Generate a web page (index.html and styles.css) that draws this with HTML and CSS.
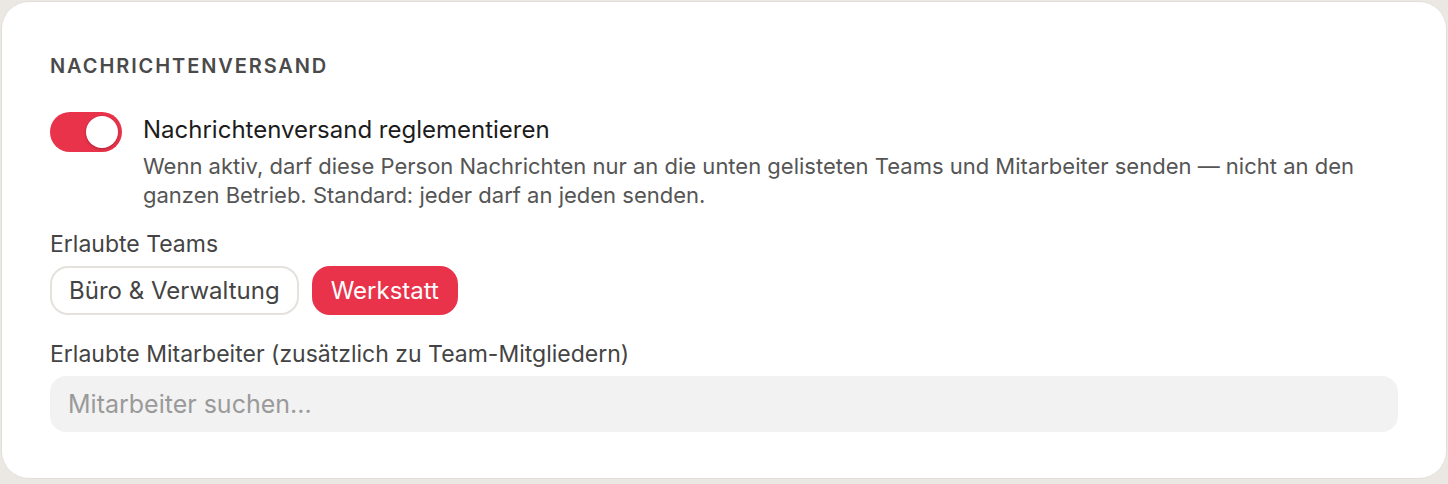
FILE: index.html
```html
<!DOCTYPE html>
<html lang="de">
<head>
    <meta charset="UTF-8">
    <meta name="viewport" content="width=device-width, initial-scale=1.0">
    <title>Nachrichtenversand</title>
    <link rel="stylesheet" href="styles.css">
</head>
<body>
    <section class="card">
        <h2 class="card-title">Nachrichtenversand</h2>

        <div class="toggle-row">
            <span class="toggle on"><span class="knob"></span></span>
            <div class="toggle-text">
                <div class="toggle-label">Nachrichtenversand reglementieren</div>
                <p class="toggle-desc">Wenn aktiv, darf diese Person Nachrichten nur an die unten gelisteten Teams und Mitarbeiter senden — nicht an den ganzen Betrieb. Standard: jeder darf an jeden senden.</p>
            </div>
        </div>

        <div class="field">
            <div class="field-label">Erlaubte Teams</div>
            <div class="chips">
                <span class="chip">Büro &amp; Verwaltung</span>
                <span class="chip active">Werkstatt</span>
            </div>
        </div>

        <div class="field">
            <div class="field-label">Erlaubte Mitarbeiter (zusätzlich zu Team-Mitgliedern)</div>
            <input class="search" type="text" placeholder="Mitarbeiter suchen...">
        </div>
    </section>
</body>
</html>
```

FILE: styles.css
```css
* {
    margin: 0;
    padding: 0;
    box-sizing: border-box;
    font-family: Inter, "Noto Sans", sans-serif;
}
body {
    background: #ebe8e3;
    padding: 1px 1px 5px 1px;
}
.card {
    background: #fff;
    border: 1px solid #e2dfda;
    border-radius: 28px;
    padding: 50px 48px 46px 48px;
    height: 478px;
}
.card-title {
    font-size: 20px;
    font-weight: 600;
    letter-spacing: 1.9px;
    text-transform: uppercase;
    color: #4a4a4a;
    line-height: 28px;
    margin-bottom: 32px;
}
.toggle-row {
    display: flex;
    gap: 21px;
    align-items: flex-start;
}
.toggle {
    flex: none;
    width: 72px;
    height: 40px;
    border-radius: 20px;
    background: #e8334b;
    display: flex;
    align-items: center;
    justify-content: flex-end;
    padding: 4px;
}
.knob {
    width: 32px;
    height: 32px;
    border-radius: 50%;
    background: #fff;
    box-shadow: 0 1px 3px rgba(0, 0, 0, 0.25);
}
.toggle-label {
    font-size: 24px;
    color: #1c1c1c;
    line-height: 36px;
}
.toggle-desc {
    font-size: 22px;
    color: #555;
    line-height: 29px;
    margin-top: 4px;
}
.field {
    margin-top: 21px;
}
.field + .field {
    margin-top: 26px;
}
.field-label {
    font-size: 23px;
    color: #444;
    line-height: 26px;
    margin-bottom: 9px;
}
.chips {
    display: flex;
    gap: 13px;
}
.chip {
    height: 49px;
    padding: 0 17px;
    border: 2px solid #e5e2dd;
    border-radius: 18px;
    font-size: 24px;
    color: #444;
    display: flex;
    align-items: center;
}
.chip.active {
    background: #e8334b;
    border-color: #e8334b;
    color: #fff;
}
.search {
    display: block;
    width: 100%;
    height: 56px;
    border: none;
    outline: none;
    border-radius: 16px;
    background: #f2f2f2;
    padding: 0 18px;
    font-size: 25px;
    color: #333;
}
.search::placeholder {
    color: #9a9a9a;
}
```
